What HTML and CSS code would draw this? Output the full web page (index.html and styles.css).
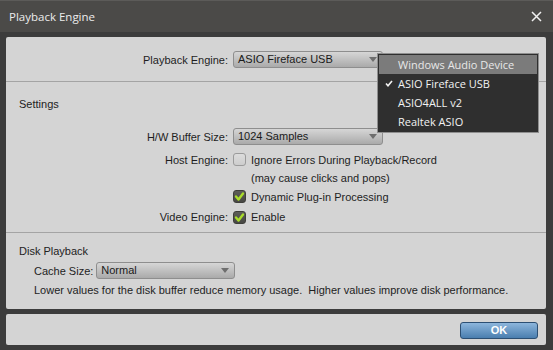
FILE: index.html
```html
<!DOCTYPE html>
<html>
<head>
<meta charset="utf-8">
<link rel="stylesheet" href="styles.css">
</head>
<body>
<div class="window">
  <div class="titlebar">
    <span class="title">Playback Engine</span>
    <svg class="close" width="11" height="11" viewBox="0 0 11 11"><path d="M1 1 L10 10 M10 1 L1 10" stroke="#f0f0f0" stroke-width="1.5" fill="none"/></svg>
  </div>
  <div class="body">
    <div class="panel main">
      <div class="section top">
        <div class="frow">
          <span class="label">Playback Engine:</span>
          <div class="select engine">ASIO Fireface USB</div>
        </div>
      </div>
      <div class="section settings">
        <div class="heading">Settings</div>
        <div class="frow hw">
          <span class="label">H/W Buffer Size:</span>
          <div class="select buffer">1024 Samples</div>
        </div>
        <div class="frow r-host">
          <span class="label">Host Engine:</span>
          <div class="opt"><span class="cb"></span><span>Ignore Errors During Playback/Record</span></div>
        </div>
        <div class="frow r-note">
          <span class="label"></span>
          <span class="note">(may cause clicks and pops)</span>
        </div>
        <div class="frow r-dyn">
          <span class="label"></span>
          <div class="opt"><span class="cb on"><svg width="13" height="13" viewBox="0 0 13 13"><path d="M3 6.5 L5.5 9.5 L10 3.5" stroke="#a9dc2a" stroke-width="2.4" fill="none" stroke-linecap="round" stroke-linejoin="round"/></svg></span><span>Dynamic Plug-in Processing</span></div>
        </div>
        <div class="frow r-video">
          <span class="label">Video Engine:</span>
          <div class="opt"><span class="cb on"><svg width="13" height="13" viewBox="0 0 13 13"><path d="M3 6.5 L5.5 9.5 L10 3.5" stroke="#a9dc2a" stroke-width="2.4" fill="none" stroke-linecap="round" stroke-linejoin="round"/></svg></span><span>Enable</span></div>
        </div>
      </div>
      <div class="section disk">
        <div class="heading">Disk Playback</div>
        <div class="cache">
          <span>Cache Size:</span>
          <div class="select cachesel">Normal</div>
        </div>
        <div class="hint">Lower values for the disk buffer reduce memory usage.&nbsp; Higher values improve disk performance.</div>
      </div>
    </div>
    <div class="panel footer">
      <button class="ok">OK</button>
    </div>
  </div>
  <div class="menu">
    <div class="item hl">Windows Audio Device</div>
    <div class="item checked"><svg class="tick" width="8" height="7" viewBox="0 0 8 7"><path d="M1 3.5 L3 5.8 L7 1" stroke="#f2f2f2" stroke-width="1.6" fill="none"/></svg>ASIO Fireface USB</div>
    <div class="item">ASIO4ALL v2</div>
    <div class="item">Realtek ASIO</div>
  </div>
</div>
</body>
</html>
```

FILE: styles.css
```css
body {
  margin: 0;
  background: #3b3b3b;
  font-family: "Liberation Sans", Arial, sans-serif;
  font-size: 11px;
  color: #1e1e1e;
  overflow: hidden;
}

.window {
  position: relative;
  width: 553px;
  height: 350px;
  background: #3c3c3c;
}

.titlebar {
  height: 32px;
  box-sizing: border-box;
  background: #4b4a48;
  border-top: 1px solid #5c5b59;
  display: flex;
  align-items: center;
  justify-content: space-between;
  padding: 0 11px 0 9px;
  font-family: "Open Sans", sans-serif;
  font-size: 11.5px;
  color: #ececec;
}

.close {
  display: block;
}

.body {
  display: flex;
  flex-direction: column;
  gap: 5px;
  padding: 5px 7px 5px 6px;
}

.panel {
  background: #d4d4d4;
  border-radius: 2px;
  box-sizing: border-box;
}

.main {
  height: 272px;
  display: flex;
  flex-direction: column;
}

.section.top {
  padding: 14px 0 13px;
  border-bottom: 1px solid #a4a4a4;
}

.frow {
  display: grid;
  grid-template-columns: 222px auto;
  column-gap: 5px;
  align-items: center;
}

.label {
  text-align: right;
}

.select {
  position: relative;
  height: 17px;
  box-sizing: border-box;
  border: 1px solid #8e8e8e;
  border-radius: 3px;
  background: linear-gradient(#d6d6d6, #aaaaaa);
  padding-left: 4px;
  line-height: 15px;
  color: #1a1a1a;
}

.select::after {
  content: "";
  position: absolute;
  right: 5px;
  top: 5px;
  border-left: 4px solid transparent;
  border-right: 4px solid transparent;
  border-top: 5px solid #6e6e6e;
}

.engine, .buffer {
  width: 150px;
}

.settings {
  border-bottom: 1px solid #a4a4a4;
  padding-bottom: 5px;
}

.heading {
  height: 13px;
  line-height: 13px;
  padding-left: 13px;
  color: #222;
}

.settings .heading {
  margin-top: 16px;
}

.hw {
  margin-top: 17px;
}

.r-host {
  margin-top: 5px;
  height: 19px;
}

.r-note {
  height: 18px;
}

.note {
  padding-left: 18px;
}

.r-dyn {
  height: 19px;
}

.r-video {
  margin-top: 1px;
  height: 20px;
}

.opt {
  display: flex;
  align-items: center;
  gap: 5px;
}

.cb {
  width: 13px;
  height: 13px;
  box-sizing: border-box;
  border: 1px solid #9b9b9b;
  border-radius: 3px;
  background: linear-gradient(#dcdcdc, #cdcdcd);
  display: block;
  position: relative;
}

.cb.on {
  border-color: #3e3e3a;
  background: linear-gradient(#5d5d57, #474743);
}

.cb svg {
  position: absolute;
  left: -1px;
  top: -1px;
}

.disk .heading {
  margin-top: 12px;
}

.cache {
  display: flex;
  align-items: center;
  gap: 3px;
  margin-top: 4px;
  padding-left: 28px;
}

.cachesel {
  width: 139px;
}

.hint {
  margin-top: 5px;
  padding-left: 28px;
  height: 13px;
  line-height: 13px;
}

.footer {
  height: 31px;
  display: flex;
  justify-content: flex-end;
  align-items: flex-start;
  padding: 8px 8px 0 0;
}

.ok {
  width: 78px;
  height: 17px;
  box-sizing: border-box;
  border: 1px solid #2c4f73;
  border-radius: 3px;
  background: linear-gradient(#8db6dc, #4a7eaf);
  color: #ffffff;
  font-family: "Liberation Sans", Arial, sans-serif;
  font-weight: bold;
  font-size: 11px;
  padding: 0;
  line-height: 15px;
}

.menu {
  position: absolute;
  left: 377px;
  top: 53px;
  width: 162px;
  box-sizing: border-box;
  border: 1px solid #8f8f8f;
  background: #2f2f2f;
  padding: 1px;
  font-family: "Open Sans", sans-serif;
  font-size: 11px;
  color: #f2f2f2;
}

.item {
  position: relative;
  height: 19px;
  line-height: 19px;
  padding-left: 19px;
  white-space: nowrap;
}

.item.hl {
  background: #7b7b7b;
  color: #e8e8e8;
}

.tick {
  position: absolute;
  left: 6px;
  top: 6px;
}
```
